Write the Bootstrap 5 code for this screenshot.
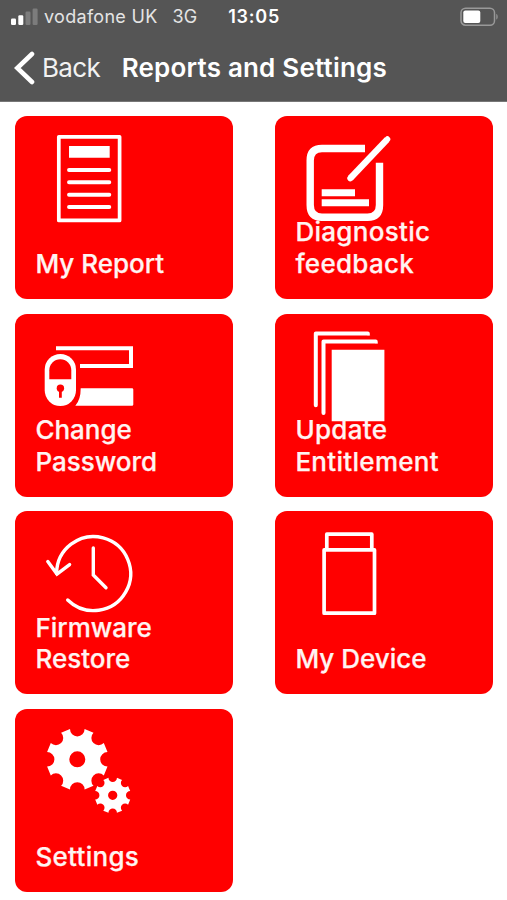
<!DOCTYPE html>
<html lang="en">
<head>
<meta charset="utf-8">
<meta name="viewport" content="width=device-width, initial-scale=1">
<title>Reports and Settings</title>
<link href="https://cdn.jsdelivr.net/npm/bootstrap@5.3.0/dist/css/bootstrap.min.css" rel="stylesheet">
<style>
  body { font-family: Inter, "Liberation Sans", sans-serif; background: #fff; overflow: hidden; }
  .app-header { background: #555; height: 102px; border-bottom: 1px solid #777; color: #fff; }
  .status-bar { height: 34px; padding: 0 8px 0 11px; font-size: 18px; line-height: 34px; color: #e4e4e4; }
  .carrier { margin-left: 6px; letter-spacing: .3px; }
  .network { margin-left: 15px; }
  .clock { margin-left: 31px; color: #fff; font-weight: 600; letter-spacing: .8px; }
  .title-bar { height: 67px; padding-left: 14px; line-height: 67px; }
  .back-link { font-size: 26px; color: #f2f2f2; letter-spacing: -.65px; margin-left: 7px; }
  .page-title { font-size: 26px; font-weight: 600; line-height: inherit; margin-left: 21.5px; letter-spacing: .2px; }
  .tile-area { padding: 14px 14.5px 0 15px; }
  .tile-grid { --bs-gutter-x: 42.5px; --bs-gutter-y: 14.6px; }
  .tile { display: grid; height: 183px; background: #f00; color: #fff; border-radius: 12px; overflow: hidden; text-decoration: none; }
  .tile > * { grid-area: 1 / 1; }
  .tile-label { align-self: end; padding: 0 0 19.4px 20.4px; font-size: 26px; font-weight: 500; line-height: 31.6px; color: #fff4f2; -webkit-text-stroke: .25px #fff4f2; }
  .label-wide { letter-spacing: .3px; }
</style>
<script src="https://cdn.jsdelivr.net/npm/bootstrap@5.3.0/dist/js/bootstrap.bundle.min.js"></script>
</head>
<body>
<header class="app-header">
  <div class="status-bar d-flex align-items-center text-nowrap">
    <svg width="27" height="18" viewBox="0 0 27 18"><g fill="#fff"><rect y="10.5" width="5" height="6.5" rx="1.2"/><rect x="7.3" y="7.2" width="5" height="9.8" rx="1.2"/></g><g fill="#7c7c7c"><rect x="14.5" y="3.5" width="5" height="13.5" rx="1.2"/><rect x="21.6" y="0.5" width="5" height="16.5" rx="1.2"/></g></svg>
    <span class="carrier">vodafone UK</span>
    <span class="network">3G</span>
    <span class="clock">13:05</span>
    <svg class="ms-auto" width="39" height="20" viewBox="0 0 39 20"><rect x="1" y="1.2" width="33.5" height="17" rx="4.5" fill="none" stroke="#999" stroke-width="1.5"/><rect x="3.3" y="3.5" width="17" height="12.4" rx="2" fill="#fff"/><path d="M36.3 7c1.8.5 1.8 5 0 5.5z" fill="#999"/></svg>
  </div>
  <nav class="title-bar d-flex align-items-center text-nowrap">
    <svg width="21" height="34" viewBox="0 0 21 34"><path d="M18 3 3.3 17 18 31" fill="none" stroke="#fff" stroke-width="4.6" stroke-linecap="round" stroke-linejoin="miter"/></svg>
    <a class="back-link text-decoration-none" href="#">Back</a>
    <h1 class="page-title mb-0">Reports and Settings</h1>
  </nav>
</header>
<main class="tile-area">
  <div class="row row-cols-2 tile-grid mt-0">
    <div class="col mt-0">
      <a class="tile" href="#">
        <svg width="130" height="120" viewBox="0 0 130 120" fill="none" stroke="#fff"><rect x="43.8" y="20.8" width="60.8" height="83.6" stroke-width="3.7" stroke-linejoin="round"/><path d="M54 30h40.7v11.7H54z" fill="#fff" stroke="none"/><path d="M54 54h40.3M54 66.2h40.3M54 78.7h40.3M54 91h40.3" stroke-width="3.9" stroke-linecap="round"/></svg>
        <span class="tile-label">My Report</span>
      </a>
    </div>
    <div class="col mt-0">
      <a class="tile" href="#">
        <svg width="130" height="120" viewBox="0 0 130 120" fill="none" stroke="#fff" stroke-width="7.4"><path d="M90 32.5H47Q35.2 32.5 35.2 44.5V89Q35.2 101.2 47 101.2H92.5Q104.5 101.2 104.5 89V46.7"/><path d="M112 23.6 75.3 62.3" stroke-width="6.4"/><path d="M76 61.6 75.2 62.4M111.8 23.8 112.4 23.2" stroke-width="5.8" stroke-linecap="round"/><path d="M46.7 76.8H80M46.7 86.7H94" stroke-width="7"/></svg>
        <span class="tile-label label-wide">Diagnostic<br>feedback</span>
      </a>
    </div>
    <div class="col">
      <a class="tile" href="#">
        <svg width="130" height="120" viewBox="0 0 130 120" fill="none"><path d="M41 34.2H116V52.1H65" stroke="#fff" stroke-width="4"/><path d="M65.7 74.3H117q1.3 0 1.3 1.3V90.4q0 1.3-1.3 1.3H60.3Q65.7 86 65.7 74.3z" fill="#fff"/><rect x="29.7" y="40" width="31.3" height="52" rx="15.65" fill="#fff"/><path d="M34.3 65.3V56.3a11 11 0 0 1 22 0V65.3z" fill="#f00"/><circle cx="45.4" cy="74.3" r="3.7" fill="#f00"/><path d="M45.4 75V83.7" stroke="#f00" stroke-width="2.8"/></svg>
        <span class="tile-label">Change<br>Password</span>
      </a>
    </div>
    <div class="col">
      <a class="tile" href="#">
        <svg width="130" height="120" viewBox="0 0 130 120" fill="none" stroke="#fff" stroke-width="4"><path d="M40.8 91.2V19.4H92.8M48.5 99V27.6H100.7" stroke-linecap="round" stroke-linejoin="round"/><path d="M92.5 21.4h2.7l-1.5-3M100.4 29.6h2.7l-1.5-3" fill="#fff" stroke="none"/><path d="M56.7 35.7h52.7v71.6H56.7z" fill="#fff" stroke="none"/></svg>
        <span class="tile-label label-wide">Update<br>Entitlement</span>
      </a>
    </div>
    <div class="col">
      <a class="tile" href="#">
        <svg width="130" height="120" viewBox="0 0 130 120" fill="none" stroke="#fff" stroke-width="3.4" stroke-linecap="round"><path d="M52.7 89A37 37 0 1 0 41.6 62.5"/><path d="M32.8 50.6 42 63 54.6 53.6M78.3 37V64L91 76.7"/></svg>
        <span class="tile-label">Firmware<br>Restore</span>
      </a>
    </div>
    <div class="col">
      <a class="tile" href="#">
        <svg width="130" height="120" viewBox="0 0 130 120" fill="none" stroke="#fff" stroke-width="3.7" stroke-linejoin="round"><path d="M51.8 38.8V23.2H96.8V38.8"/><rect x="49.1" y="38.9" width="50.4" height="63.3"/></svg>
        <span class="tile-label">My Device</span>
      </a>
    </div>
    <div class="col">
      <a class="tile" href="#">
        <svg width="130" height="120" viewBox="0 0 130 120" fill="#fff" fill-rule="evenodd">
          <defs><path id="gear" d="M7.3 -30.2L16.2 -26.5A7 7 0 0 0 26.5 -16.2L30.2 -7.3A7 7 0 0 0 30.2 7.3L26.5 16.2A7 7 0 0 0 16.2 26.5L7.3 30.2A7 7 0 0 0 -7.3 30.2L-16.2 26.5A7 7 0 0 0 -26.5 16.2L-30.2 7.3A7 7 0 0 0 -30.2 -7.3L-26.5 -16.2A7 7 0 0 0 -16.2 -26.5L-7.3 -30.2A7 7 0 0 0 7.3 -30.2zM8 0A8 8 0 1 0 -8 0A8 8 0 1 0 8 0z"/></defs>
          <use href="#gear" transform="translate(62.3 50.3)"/><use href="#gear" transform="translate(97.7 86.3) scale(.58)"/>
        </svg>
        <span class="tile-label label-wide">Settings</span>
      </a>
    </div>
  </div>
</main>
</body>
</html>
